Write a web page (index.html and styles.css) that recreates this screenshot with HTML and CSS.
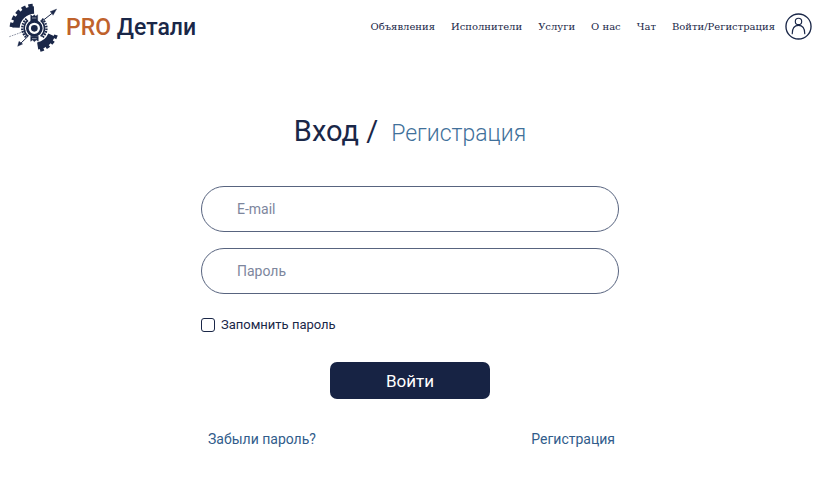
FILE: index.html
```html
<!DOCTYPE html>
<html lang="ru">
<head>
<meta charset="utf-8">
<meta name="viewport" content="width=device-width, initial-scale=1">
<title>PRO Детали — Вход</title>
<link rel="stylesheet" href="styles.css">
</head>
<body>
<header class="header">
  <a class="brand" href="#">
    <svg class="brand-mark" viewBox="27 8 147 150" fill="none" stroke="#1a2748" aria-hidden="true">
      <path d="M48 82A56 56 0 0 1 102 29" stroke-width="22"/>
      <path d="M35 80A69 69 0 0 1 104 16" stroke-width="12" stroke-dasharray="13 8"/>
      <path d="M155 104A55 55 0 0 1 113 137" stroke-width="22"/>
      <path d="M168 104A67 67 0 0 1 113 150" stroke-width="11" stroke-dasharray="11 8"/>
      <path d="M28 109L78 91" stroke-width="1.5" stroke-dasharray="5 3"/>
      <path d="M58 133L86 106M123 65L160 36" stroke-width="3"/>
      <path d="M170 26L150 34L156 39L159 45ZM53 138L57 123L68 131Z" fill="#1a2748" stroke-width="1"/>
      <circle cx="103" cy="84" r="21" stroke-width="8"/>
      <circle cx="103" cy="84" r="10" fill="#1a2748" stroke="none"/>
      <path d="M84 60A31 31 0 0 0 84 108M122 60A31 31 0 0 1 122 108" stroke-width="5"/>
      <path d="M80 56A36 36 0 0 0 80 112M126 56A36 36 0 0 1 126 112" stroke-width="7" stroke-dasharray="5 3"/>
      <path d="M92 62V43L98 48L103 43L107 48L113 43V62ZM92 108V123L98 119L103 124L109 119L115 123V108Z" fill="#1a2748" stroke-width="1"/>
      <path d="M96 53H109M96 115H110" stroke="#fff" stroke-width="1.500"/>
    </svg>
    <span class="brand-name"><span class="brand-accent">PRO</span> Детали</span>
  </a>
  <nav class="nav">
    <a href="#">Объявления</a>
    <a href="#">Исполнители</a>
    <a href="#">Услуги</a>
    <a href="#">О нас</a>
    <a href="#">Чат</a>
    <a class="nav-account" href="#">Войти/Регистрация
      <svg class="avatar" viewBox="0 0 28 28" fill="none" stroke="#1a2748" aria-hidden="true">
        <circle cx="14" cy="14" r="13" stroke-width="1.4"/>
        <circle cx="14" cy="8.700" r="3.300" stroke-width="1.200"/>
        <path d="M7.500 21.500C7.500 16 10 12.800 14 12.800S20.500 16 20.500 21.500" stroke-width="1.200" stroke-linecap="round"/>
      </svg>
    </a>
  </nav>
</header>
<main class="main">
  <h1 class="title">Вход / <a href="#">Регистрация</a></h1>
  <form class="form">
    <input class="field" type="email" placeholder="E-mail" aria-label="E-mail">
    <input class="field" type="password" placeholder="Пароль" aria-label="Пароль">
    <label class="remember"><input type="checkbox">Запомнить пароль</label>
    <button class="submit" type="submit">Войти</button>
    <div class="links">
      <a href="#">Забыли пароль?</a>
      <a href="#">Регистрация</a>
    </div>
  </form>
</main>
</body>
</html>
```
FILE: styles.css
```css
* {
  box-sizing: border-box;
}

body {
  margin: 0;
  background: #fff;
  color: #1a2748;
  font-family: Roboto, sans-serif;
}

a {
  color: inherit;
  text-decoration: none;
}

.header {
  display: flex;
  align-items: flex-start;
  justify-content: space-between;
  padding: 3px 6px 0 9px;
}

.brand {
  display: flex;
  align-items: center;
  gap: 8px;
}

.brand-mark {
  width: 49px;
  height: 50px;
}

.brand-name {
  font-size: 23px;
  font-weight: 500;
  line-height: 28px;
}

.brand-accent {
  color: #bf622c;
}

.nav {
  display: flex;
  align-items: center;
  gap: 16px;
  padding-top: 10px;
  font-family: "DejaVu Serif", serif;
  font-size: 10px;
  line-height: 16px;
}

.nav-account {
  display: flex;
  align-items: center;
  gap: 10px;
}

.avatar {
  width: 27px;
  height: 27px;
}

.main {
  display: flex;
  flex-direction: column;
  align-items: center;
  padding: 60px 16px 0 18px;
}

.title {
  display: flex;
  align-items: baseline;
  gap: 13px;
  margin: 0;
  font-size: 29px;
  font-weight: 400;
  line-height: 36px;
}

.title a {
  color: #41709a;
  font-size: 23px;
  font-weight: 300;
}

.form {
  display: flex;
  flex-direction: column;
  width: 100%;
  max-width: 418px;
  margin-top: 34px;
}

.field {
  width: 100%;
  height: 46px;
  margin-bottom: 16px;
  padding: 0 35px;
  border: 1px solid #58647f;
  border-radius: 23px;
  background: #fff;
  color: #1a2748;
  font: 400 14px/20px Roboto, sans-serif;
}

.field::placeholder {
  color: #7d869d;
  opacity: 1;
}

.remember {
  display: flex;
  align-items: center;
  align-self: flex-start;
  gap: 6px;
  margin-top: 7px;
  font-size: 13px;
  line-height: 16px;
}

.remember input {
  appearance: none;
  width: 14px;
  height: 14px;
  margin: 0;
  border: 1px solid #1a2748;
  border-radius: 3px;
}

.remember input:checked {
  background: #1a2748;
}

.submit {
  align-self: center;
  width: 160px;
  height: 37px;
  margin-top: 29px;
  border: 0;
  border-radius: 7px;
  background: #172344;
  color: #fff;
  font: 400 17px/24px Roboto, sans-serif;
}

.links {
  display: flex;
  justify-content: space-between;
  margin-top: 30px;
  padding: 0 4px 0 7px;
  color: #315c8b;
  font-size: 14px;
  line-height: 20px;
}
```
